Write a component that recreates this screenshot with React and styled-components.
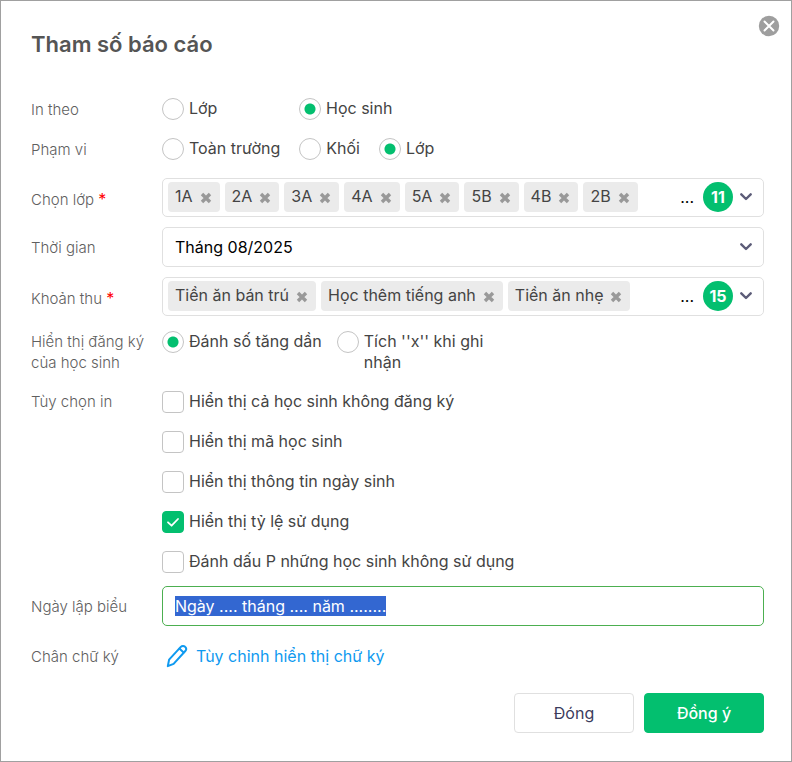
import React, { useEffect, useRef, useState } from "react";
import styled, { createGlobalStyle, css } from "styled-components";

const GlobalStyle = createGlobalStyle`
  *, *::before, *::after { box-sizing: border-box; }
  body {
    margin: 0;
    background: #fff;
    color: #444;
    font-family: Inter, "Noto Sans", sans-serif;
    font-size: 16px;
    line-height: 21px;
  }
  button, input, select { font: inherit; color: inherit; margin: 0; }
`;

const Dialog = styled.form`
  display: flex;
  flex-direction: column;
  min-height: 100vh;
  padding: 14px 27px 28px 30px;
  border: 1px solid #a0a0a0;
  background: #fff;
`;

const Header = styled.header`
  display: flex;
  justify-content: space-between;
  align-items: flex-start;
  margin-right: -16px;
  margin-bottom: 30px;
`;

const Title = styled.h1`
  margin: 14px 0 0;
  font-size: 22px;
  line-height: 30px;
  font-weight: 600;
  color: #555;
`;

const IconButton = styled.button`
  display: flex;
  align-items: center;
  justify-content: center;
  flex: none;
  padding: 0;
  border: 0;
  background: none;
  cursor: pointer;
`;

const Row = styled.div`
  display: grid;
  grid-template-columns: 131px minmax(0, 1fr);
  align-items: ${(p) => p.$align || "center"};
  min-height: ${(p) => p.$height || 0}px;
  margin-top: ${(p) => p.$gap || 0}px;
`;

const Caption = styled.div`
  padding-top: ${(p) => (p.$required ? 4 : 0)}px;
  font-size: 15px;
  line-height: 21px;
  font-weight: 300;
  color: #606060;
`;

const Required = styled.span`
  font-size: 16px;
  font-weight: 400;
  color: #f00;
`;

const Options = styled.div`
  display: flex;
  align-items: flex-start;
  gap: ${(p) => p.$gap || 19}px;
`;

const CheckList = styled.div`
  display: flex;
  flex-direction: column;
  align-items: flex-start;
  gap: 18px;
`;

const Option = styled.label`
  display: flex;
  align-items: flex-start;
  gap: 5px;
  min-width: ${(p) => p.$min || 0}px;
  max-width: ${(p) => (p.$max ? `${p.$max}px` : "none")};
  min-height: 22px;
  cursor: pointer;
`;

const control = css`
  appearance: none;
  flex: none;
  width: 22px;
  height: 22px;
  border: 1px solid #c4c4c4;
  background: #fff;
  cursor: pointer;
`;

const Radio = styled.input.attrs({ type: "radio" })`
  ${control}
  border-radius: 50%;
  &:checked {
    background: radial-gradient(circle, #03bf6f 5px, #fff 6px);
  }
`;

const CheckWrap = styled.span`
  display: grid;
  flex: none;
  place-items: center;
  & > * { grid-area: 1 / 1; }
  & > svg { pointer-events: none; }
`;

const Checkbox = styled.input.attrs({ type: "checkbox" })`
  ${control}
  border-radius: 4px;
  &:checked {
    border-color: #03bf6f;
    background: #03bf6f;
  }
`;

const field = css`
  width: 100%;
  border: 1px solid #e0e0e0;
  border-radius: 5px;
  background: #fff;
`;

const TagField = styled.div`
  ${field}
  display: flex;
  align-items: center;
  padding: 3px 11px 4px 5px;
`;

const Tags = styled.ul`
  display: flex;
  flex: 1;
  gap: 5px;
  min-width: 0;
  margin: 0;
  padding: 0;
  overflow: hidden;
  list-style: none;
`;

const Tag = styled.li`
  display: flex;
  flex: none;
  align-items: center;
  gap: 7px;
  height: 30px;
  padding: 0 8px 0 7px;
  border-radius: 4px;
  background: #ebebeb;
`;

const TagText = styled.span`
  padding-bottom: 2px;
`;

const TagRemove = styled(IconButton)`
  padding-top: 2px;
`;

const More = styled.span`
  margin-right: 9px;
  color: #000;
`;

const Count = styled.span`
  display: flex;
  flex: none;
  align-items: center;
  justify-content: center;
  width: 30px;
  height: 30px;
  margin-right: 7px;
  border-radius: 50%;
  background: #03bf6f;
  color: #fff;
  font-weight: 700;
`;

const SelectWrap = styled.div`
  display: grid;
  align-items: center;
  & > * { grid-area: 1 / 1; }
  & > svg {
    justify-self: end;
    margin-right: 12px;
    pointer-events: none;
  }
`;

const Select = styled.select`
  ${field}
  appearance: none;
  height: 40px;
  padding: 0 40px 0 12px;
  color: #000;
`;

const TextInput = styled.input.attrs({ type: "text" })`
  ${field}
  height: 40px;
  padding: 0 12px;
  border-color: #4caf50;
  outline: none;
  color: #000;
  &::selection {
    background: #3367d1;
    color: #fff;
  }
`;

const EditLink = styled.a`
  display: flex;
  align-items: center;
  gap: 8px;
  width: fit-content;
  padding-left: 4px;
  color: #0f9af0;
  text-decoration: none;
`;

const Footer = styled.footer`
  display: flex;
  justify-content: flex-end;
  gap: 10px;
  margin-top: 17px;
`;

const Button = styled.button`
  width: 120px;
  height: 40px;
  border: 1px solid ${(p) => (p.$primary ? "#03bf6f" : "#e0e0e0")};
  border-radius: 4px;
  background: ${(p) => (p.$primary ? "#03bf6f" : "#fff")};
  color: ${(p) => (p.$primary ? "#fff" : "#3b3b5c")};
  font-weight: ${(p) => (p.$primary ? 500 : 400)};
  cursor: pointer;
`;

const CloseIcon = () => (
  <svg width="22" height="22" viewBox="0 0 22 22" aria-hidden="true">
    <circle cx="11" cy="11" r="10.2" fill="#9e9e9e" />
    <path d="M6.5 6.5l9 9M15.5 6.5l-9 9" stroke="#fff" strokeWidth="2" strokeLinecap="round" />
  </svg>
);

const RemoveIcon = () => (
  <svg width="12" height="12" viewBox="0 0 12 12" aria-hidden="true">
    <path d="M2 2l8 8M10 2l-8 8" stroke="#999" strokeWidth="3.4" />
  </svg>
);

const ChevronIcon = () => (
  <svg width="12" height="8" viewBox="0 0 12 8" fill="none" aria-hidden="true">
    <path d="M1.3 1.3L6 6l4.7-4.7" stroke="#5c5c78" strokeWidth="2.4" strokeLinecap="round" strokeLinejoin="round" />
  </svg>
);

const TickIcon = () => (
  <svg width="14" height="12" viewBox="0 0 14 12" fill="none" aria-hidden="true">
    <path d="M2 6.3l3.6 3.4L12 3" stroke="#fff" strokeWidth="1.8" strokeLinecap="round" strokeLinejoin="round" />
  </svg>
);

const PencilIcon = () => (
  <svg width="22" height="24" viewBox="0 0 22 24" fill="none" aria-hidden="true">
    <g stroke="#0f9af0" strokeWidth="2" strokeLinejoin="round" strokeLinecap="round">
      <path d="M1.8 22.2l1.3-6.6L14.8 2.9a3 3 0 0 1 4.3-.1 3 3 0 0 1 .2 4.2L7.6 19.8z" />
      <path d="M13.4 4.6l4.2 3.9" />
    </g>
  </svg>
);

const CLASSES = ["1A", "2A", "3A", "4A", "5A", "5B", "4B", "2B"];
const FEES = ["Tiền ăn bán trú", "Học thêm tiếng anh", "Tiền ăn nhẹ"];
const PRINT_OPTIONS = [
  "Hiển thị cả học sinh không đăng ký",
  "Hiển thị mã học sinh",
  "Hiển thị thông tin ngày sinh",
  "Hiển thị tỷ lệ sử dụng",
  "Đánh dấu P những học sinh không sử dụng",
];

function RadioRow({ caption, name, options, initial, gap, ...row }) {
  const [value, setValue] = useState(initial);
  return (
    <Row role="radiogroup" aria-labelledby={`${name}-caption`} {...row}>
      <Caption id={`${name}-caption`}>{caption}</Caption>
      <Options $gap={gap}>
        {options.map((o) => (
          <Option key={o.text} $min={o.min} $max={o.max}>
            <Radio name={name} checked={value === o.text} onChange={() => setValue(o.text)} />
            <span>{o.text}</span>
          </Option>
        ))}
      </Options>
    </Row>
  );
}

function TagRow({ caption, id, initial, total, ...row }) {
  const [items, setItems] = useState(initial);
  const count = total - (initial.length - items.length);
  return (
    <Row {...row}>
      <Caption id={id} $required>
        {caption} <Required>*</Required>
      </Caption>
      <TagField role="group" aria-labelledby={id}>
        <Tags>
          {items.map((t) => (
            <Tag key={t}>
              <TagText>{t}</TagText>
              <TagRemove
                type="button"
                aria-label={`Xóa ${t}`}
                onClick={() => setItems(items.filter((i) => i !== t))}
              >
                <RemoveIcon />
              </TagRemove>
            </Tag>
          ))}
        </Tags>
        <More>...</More>
        <Count>{count}</Count>
        <IconButton type="button" aria-label={`Mở ${caption}`}>
          <ChevronIcon />
        </IconButton>
      </TagField>
    </Row>
  );
}

export default function App() {
  const dateRef = useRef(null);
  useEffect(() => {
    dateRef.current.focus();
    dateRef.current.select();
  }, []);

  return (
    <>
      <GlobalStyle />
      <Dialog role="dialog" aria-labelledby="title" onSubmit={(e) => e.preventDefault()}>
        <Header>
          <Title id="title">Tham số báo cáo</Title>
          <IconButton type="button" aria-label="Đóng hộp thoại">
            <CloseIcon />
          </IconButton>
        </Header>

        <RadioRow
          caption="In theo"
          name="print-by"
          initial="Học sinh"
          options={[{ text: "Lớp", min: 118 }, { text: "Học sinh" }]}
          $height={40}
        />
        <RadioRow
          caption="Phạm vi"
          name="scope"
          initial="Lớp"
          options={[{ text: "Toàn trường" }, { text: "Khối" }, { text: "Lớp" }]}
          $height={40}
        />
        <TagRow caption="Chọn lớp" id="classes" initial={CLASSES} total={11} $gap={9} />
        <Row $gap={10}>
          <Caption as="label" htmlFor="period">Thời gian</Caption>
          <SelectWrap>
            <Select id="period" defaultValue="08">
              <option value="08">Tháng 08/2025</option>
            </Select>
            <ChevronIcon />
          </SelectWrap>
        </Row>
        <TagRow caption="Khoản thu" id="fees" initial={FEES} total={15} $gap={10} />
        <RadioRow
          caption="Hiển thị đăng ký của học sinh"
          name="display"
          initial="Đánh số tăng dần"
          options={[{ text: "Đánh số tăng dần" }, { text: "Tích ''x'' khi ghi nhận", max: 160 }]}
          gap={15}
          $gap={15}
          $align="start"
        />
        <Row $gap={18} $align="start" role="group" aria-labelledby="print-options">
          <Caption id="print-options">Tùy chọn in</Caption>
          <CheckList>
            {PRINT_OPTIONS.map((text, i) => (
              <Option key={text}>
                <CheckWrap>
                  <Checkbox defaultChecked={i === 3} />
                  <TickIcon />
                </CheckWrap>
                <span>{text}</span>
              </Option>
            ))}
          </CheckList>
        </Row>
        <Row $gap={13}>
          <Caption as="label" htmlFor="date">Ngày lập biểu</Caption>
          <TextInput id="date" ref={dateRef} defaultValue="Ngày .... tháng .... năm ........" />
        </Row>
        <Row $gap={10} $height={40}>
          <Caption>Chân chữ ký</Caption>
          <EditLink href="#signature">
            <PencilIcon />
            Tùy chỉnh hiển thị chữ ký
          </EditLink>
        </Row>

        <Footer>
          <Button type="button">Đóng</Button>
          <Button type="submit" $primary>Đồng ý</Button>
        </Footer>
      </Dialog>
    </>
  );
}
